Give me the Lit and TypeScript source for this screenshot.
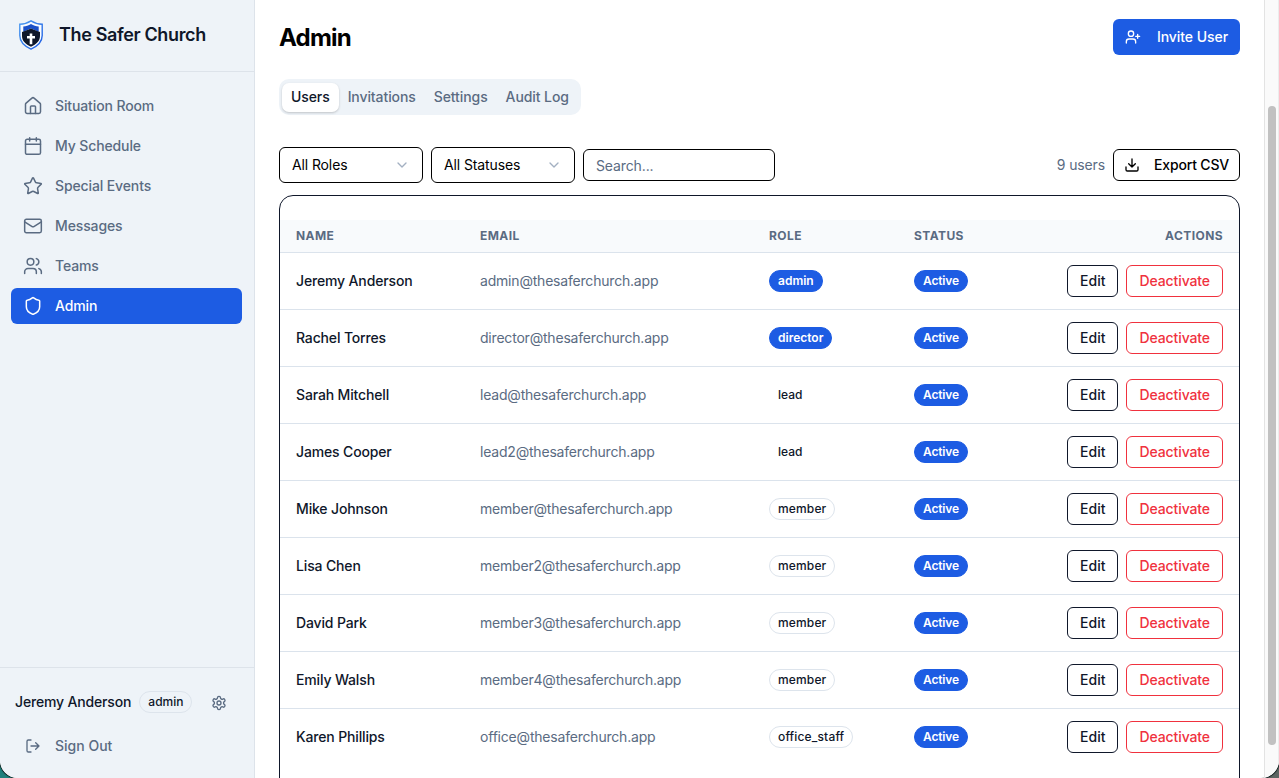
import { LitElement, html, css, svg } from "lit";
import { customElement, property } from "lit/decorators.js";
import { classMap } from "lit/directives/class-map.js";

const ICONS: Record<string, unknown> = {
  home: svg`<path d="M15 21v-8a1 1 0 0 0-1-1h-4a1 1 0 0 0-1 1v8"/><path d="M3 10a2 2 0 0 1 .709-1.528l7-5.999a2 2 0 0 1 2.582 0l7 5.999A2 2 0 0 1 21 10v9a2 2 0 0 1-2 2H5a2 2 0 0 1-2-2z"/>`,
  calendar: svg`<path d="M8 2v4M16 2v4"/><rect width="18" height="18" x="3" y="4" rx="2"/><path d="M3 10h18"/>`,
  star: svg`<path d="M11.525 2.295a.53.53 0 0 1 .95 0l2.31 4.679a2.123 2.123 0 0 0 1.595 1.16l5.166.756a.53.53 0 0 1 .294.904l-3.736 3.638a2.123 2.123 0 0 0-.611 1.878l.882 5.14a.53.53 0 0 1-.771.56l-4.618-2.428a2.122 2.122 0 0 0-1.973 0L6.396 21.01a.53.53 0 0 1-.77-.56l.881-5.139a2.122 2.122 0 0 0-.611-1.879L2.16 9.795a.53.53 0 0 1 .294-.906l5.165-.755a2.122 2.122 0 0 0 1.597-1.16z"/>`,
  mail: svg`<rect width="20" height="16" x="2" y="4" rx="2"/><path d="m22 7-8.97 5.7a1.94 1.94 0 0 1-2.06 0L2 7"/>`,
  users: svg`<path d="M16 21v-2a4 4 0 0 0-4-4H6a4 4 0 0 0-4 4v2"/><circle cx="9" cy="7" r="4"/><path d="M22 21v-2a4 4 0 0 0-3-3.87M16 3.13a4 4 0 0 1 0 7.75"/>`,
  shield: svg`<path d="M20 13c0 5-3.5 7.5-7.66 8.95a1 1 0 0 1-.67-.01C7.5 20.5 4 18 4 13V6a1 1 0 0 1 1-1c2 0 4.5-1.2 6.24-2.72a1.17 1.17 0 0 1 1.52 0C14.51 3.81 17 5 19 5a1 1 0 0 1 1 1z"/>`,
  settings: svg`<path d="M12.22 2h-.44a2 2 0 0 0-2 2v.18a2 2 0 0 1-1 1.73l-.43.25a2 2 0 0 1-2 0l-.15-.08a2 2 0 0 0-2.73.73l-.22.38a2 2 0 0 0 .73 2.73l.15.1a2 2 0 0 1 1 1.72v.51a2 2 0 0 1-1 1.74l-.15.09a2 2 0 0 0-.73 2.73l.22.38a2 2 0 0 0 2.73.73l.15-.08a2 2 0 0 1 2 0l.43.25a2 2 0 0 1 1 1.73V20a2 2 0 0 0 2 2h.44a2 2 0 0 0 2-2v-.18a2 2 0 0 1 1-1.73l.43-.25a2 2 0 0 1 2 0l.15.08a2 2 0 0 0 2.73-.73l.22-.39a2 2 0 0 0-.73-2.73l-.15-.08a2 2 0 0 1-1-1.74v-.5a2 2 0 0 1 1-1.74l.15-.09a2 2 0 0 0 .73-2.73l-.22-.38a2 2 0 0 0-2.73-.73l-.15.08a2 2 0 0 1-2 0l-.43-.25a2 2 0 0 1-1-1.73V4a2 2 0 0 0-2-2z"/><circle cx="12" cy="12" r="3"/>`,
  logout: svg`<path d="M9 21H5a2 2 0 0 1-2-2V5a2 2 0 0 1 2-2h4"/><path d="m16 17 5-5-5-5M21 12H9"/>`,
  userPlus: svg`<path d="M16 21v-2a4 4 0 0 0-4-4H6a4 4 0 0 0-4 4v2"/><circle cx="9" cy="7" r="4"/><path d="M19 8v6M22 11h-6"/>`,
  download: svg`<path d="M21 15v4a2 2 0 0 1-2 2H5a2 2 0 0 1-2-2v-4"/><path d="m7 10 5 5 5-5M12 15V3"/>`,
  chevron: svg`<path d="m6 9 6 6 6-6"/>`,
};

@customElement("ui-icon")
class UiIcon extends LitElement {
  static styles = css`
    :host { display: inline-flex; flex: none; }
    svg { display: block; fill: none; stroke: currentColor; stroke-linecap: round; stroke-linejoin: round; }
  `;
  @property() name = "home";
  @property({ type: Number }) size = 20;
  @property({ type: Number }) weight = 2;
  render() {
    return html`<svg width=${this.size} height=${this.size} viewBox="0 0 24 24" stroke-width=${this.weight}>${ICONS[this.name]}</svg>`;
  }
}

const NAV = [
  ["home", "Situation Room"],
  ["calendar", "My Schedule"],
  ["star", "Special Events"],
  ["mail", "Messages"],
  ["users", "Teams"],
  ["shield", "Admin"],
];

const TABS = ["Users", "Invitations", "Settings", "Audit Log"];

const USERS = [
  ["Jeremy Anderson", "admin", "admin"],
  ["Rachel Torres", "director", "director"],
  ["Sarah Mitchell", "lead", "lead"],
  ["James Cooper", "lead2", "lead"],
  ["Mike Johnson", "member", "member"],
  ["Lisa Chen", "member2", "member"],
  ["David Park", "member3", "member"],
  ["Emily Walsh", "member4", "member"],
  ["Karen Phillips", "office", "office_staff"],
];

@customElement("app-root")
class AppRoot extends LitElement {
  static styles = css`
    :host {
      display: block;
      height: 778px;
      overflow: hidden;
      background: linear-gradient(90deg, #1f7f7c 0 50%, #5d6663 50%);
      font-family: Inter, "Liberation Sans", sans-serif;
      font-size: 14px;
      line-height: 20px;
      letter-spacing: -0.12px;
      color: #0f172a;
    }
    * { box-sizing: border-box; }
    .window {
      display: flex;
      height: 100%;
      background: #fff;
      border-radius: 0 0 18px 18px;
      overflow: hidden;
      box-shadow: 0 0 1px 1px #10201f;
    }
    .sidebar {
      width: 255px;
      flex: none;
      display: flex;
      flex-direction: column;
      background: #eef3f8;
      border-right: 1px solid #dde3ea;
    }
    .brand {
      display: flex;
      align-items: center;
      gap: 16px;
      height: 72px;
      padding: 0 0 2px 19px;
      border-bottom: 1px solid #dde3ea;
      font-size: 18px;
      font-weight: 600;
      line-height: 28px;
      letter-spacing: -0.36px;
    }
    .brand svg { display: block; }
    nav { flex: 1; display: flex; flex-direction: column; gap: 4px; padding: 16px 12px 0 11px; }
    .item {
      display: flex;
      align-items: center;
      gap: 12px;
      height: 36px;
      padding: 0 12px;
      border-radius: 6px;
      font-weight: 500;
      color: #5a6b82;
    }
    .item.on { background: #1d5ce3; color: #fff; }
    .foot { height: 111px; border-top: 1px solid #dde3ea; padding: 16px 12px 0 11px; }
    .me { display: flex; align-items: center; height: 36px; padding-left: 4px; font-weight: 500; letter-spacing: -0.16px; }
    .me .badge { margin-left: 8px; letter-spacing: 0; }
    .me ui-icon { margin: 2px 0 0 19px; color: #5a6b82; }
    .out { gap: 14px; padding-left: 14px; margin-top: 8px; letter-spacing: 0; }
    .main { flex: 1; padding: 19px 24px 0; min-width: 0; }
    .head { display: flex; justify-content: space-between; height: 36px; align-items: center; }
    h1 { margin: 2px 0 0; font-size: 24px; line-height: 32px; font-weight: 700; letter-spacing: -0.8px; color: #000; }
    .primary {
      display: flex;
      align-items: center;
      gap: 16px;
      height: 36px;
      padding: 0 12px;
      border-radius: 6px;
      background: #1d5ce3;
      color: #fff;
      font-weight: 500;
      letter-spacing: -0.06px;
    }
    .tabs {
      display: inline-flex;
      align-items: flex-start;
      height: 36px;
      margin-top: 24px;
      padding: 4px 3px 3px;
      border-radius: 10px;
      background: #eef3f8;
      vertical-align: top;
      letter-spacing: -0.09px;
    }
    .tab { height: 29px; padding: 4px 9px; border-radius: 7px; font-weight: 500; color: #5a6b82; }
    .tab.on { background: #fff; color: #0f172a; box-shadow: 0 1px 3px #0000001a, 0 1px 2px #0000001a; }
    .filters { display: flex; align-items: center; gap: 8px; height: 36px; margin-top: 32px; color: #000; }
    .select {
      display: flex;
      align-items: center;
      justify-content: space-between;
      width: 144px;
      height: 36px;
      padding: 0 12px;
      border: 1px solid #000;
      border-radius: 6px;
    }
    .select ui-icon { color: #a3b0c2; }
    .search { width: 192px; height: 32px; padding: 6px 12px 4px; border: 1px solid #000; border-radius: 6px; color: #5a6b82; }
    .count { margin-left: auto; color: #5a6b82; }
    .btn { display: inline-flex; align-items: center; height: 32px; padding: 0 12px; border: 1px solid currentColor; border-radius: 6px; font-weight: 500; letter-spacing: 0; }
    .btn.csv { gap: 14px; padding: 0 10px; letter-spacing: -0.18px; }
    .btn.danger { color: #f0313e; letter-spacing: -0.1px; }
    .card { height: 620px; margin-top: 12px; padding-top: 24px; border: 1px solid #0f172a; border-radius: 14px; }
    .row {
      display: grid;
      grid-template-columns: 184px 289px 145px 100px 1fr;
      align-items: center;
      height: 57px;
      border-bottom: 1px solid #dbe3ec;
    }
    .row > * { padding-left: 16px; }
    .row.last { border-bottom-color: transparent; }
    .row.labels { height: 33px; background: #f8fafc; font-size: 12px; line-height: 16px; font-weight: 700; letter-spacing: 0.42px; color: #5a6b82; }
    .name { font-weight: 500; letter-spacing: -0.15px; }
    .email { color: #5a6b82; letter-spacing: -0.2px; }
    .cell { display: flex; }
    .end { display: flex; justify-content: flex-end; gap: 8px; padding-right: 16px; }
    .badge {
      display: inline-flex;
      height: 22px;
      padding: 2px 8px;
      border: 1px solid #dde4ec;
      border-radius: 11px;
      font-size: 12px;
      line-height: 16px;
      font-weight: 500;
      letter-spacing: 0.15px;
    }
    .badge.fill { background: #1d5ce3; border-color: #1d5ce3; color: #fff; font-weight: 600; letter-spacing: 0; }
    .badge.status { letter-spacing: -0.15px; }
    .badge.plain { border-color: transparent; letter-spacing: 0; }
    .scroll { width: 15px; flex: none; padding: 106px 2px 0 3px; background: #fafafa; border-left: 1px solid #e3e3e3; border-right: 1px solid #ececec; }
    .thumb { width: 8px; height: 639px; border-radius: 4px; background: #c1c1c1; }
  `;

  badge(role: string) {
    return html`<span class=${classMap({ badge: true, fill: role === "admin" || role === "director", plain: role === "lead" })}>${role}</span>`;
  }

  logo() {
    return html`<svg width="24" height="30" viewBox="0 0 24 30">
      <defs><linearGradient id="rim" x1="0" y1="0" x2="1" y2="1"><stop offset="0" stop-color="#4b9af0" /><stop offset="1" stop-color="#1d5ce3" /></linearGradient></defs>
      <path d="M12 .9C8.800 3 5 4.200.800 4.300v11.200c0 6.200 4.600 10.600 11.200 13.600 6.600-3 11.200-7.400 11.200-13.600V4.300C19 4.200 15.200 3 12 .900z" fill="#f8fbff" stroke="url(#rim)" stroke-width="1.400" />
      <path d="M12 4C9.500 5.500 7 6.300 4.300 6.600v5.200L12 8.600l7.700 3.200V6.600C17 6.300 14.500 5.500 12 4z" fill="#1a50c8" />
      <path d="M12 8.400 9 9.800 3 12v4c0 5 3.700 8.200 9 10.800 5.300-2.600 9-5.800 9-10.800v-4l-6-2.200z" fill="#0f1729" />
      <path d="M10.700 13.500h2.600v2.600H16v2.400h-2.700v5.700h-2.600v-5.700H8v-2.400h2.700z" fill="#fff" />
    </svg>`;
  }

  render() {
    return html`<div class="window">
      <aside class="sidebar">
        <div class="brand">${this.logo()}<span>The Safer Church</span></div>
        <nav>
          ${NAV.map(([icon, label]) => html`<div class=${classMap({ item: true, on: label === "Admin" })}><ui-icon name=${icon} weight="1.8"></ui-icon>${label}</div>`)}
        </nav>
        <div class="foot">
          <div class="me">Jeremy Anderson<span class="badge">admin</span><ui-icon name="settings" size="16"></ui-icon></div>
          <div class="item out"><ui-icon name="logout" size="16"></ui-icon>Sign Out</div>
        </div>
      </aside>
      <main class="main">
        <div class="head">
          <h1>Admin</h1>
          <div class="primary"><ui-icon name="userPlus" size="16"></ui-icon>Invite User</div>
        </div>
        <div class="tabs">${TABS.map((t, i) => html`<div class=${classMap({ tab: true, on: i === 0 })}>${t}</div>`)}</div>
        <div class="filters">
          <div class="select">All Roles<ui-icon name="chevron" size="16"></ui-icon></div>
          <div class="select">All Statuses<ui-icon name="chevron" size="16"></ui-icon></div>
          <div class="search">Search...</div>
          <span class="count">9 users</span>
          <div class="btn csv"><ui-icon name="download" size="16"></ui-icon>Export CSV</div>
        </div>
        <section class="card">
          <div class="row labels"><span>NAME</span><span>EMAIL</span><span>ROLE</span><span>STATUS</span><span class="end">ACTIONS</span></div>
          ${USERS.map(
            ([name, mail, role], i) => html`<div class=${classMap({ row: true, last: i === USERS.length - 1 })}>
              <span class="name">${name}</span>
              <span class="email">${mail}@thesaferchurch.app</span>
              <div class="cell">${this.badge(role)}</div>
              <div class="cell"><span class="badge fill status">Active</span></div>
              <div class="end"><span class="btn">Edit</span><span class="btn danger">Deactivate</span></div>
            </div>`
          )}
        </section>
      </main>
      <div class="scroll"><div class="thumb"></div></div>
    </div>`;
  }
}
